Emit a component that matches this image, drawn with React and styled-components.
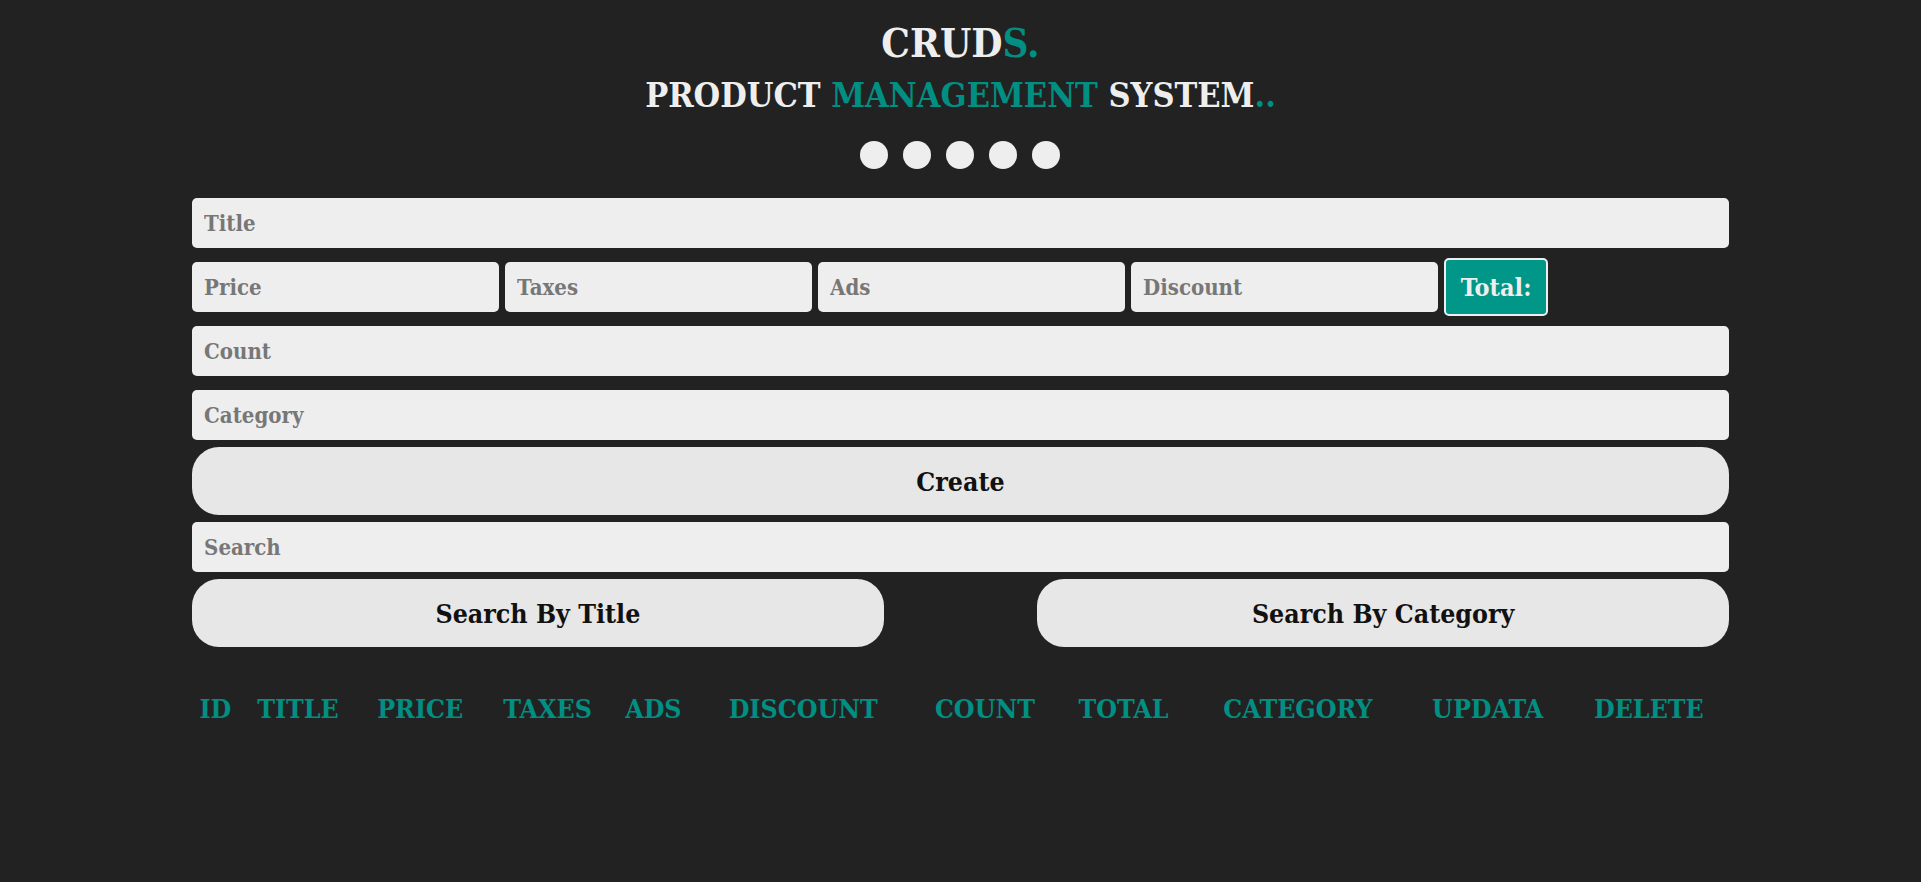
import React from "react";
import styled, { createGlobalStyle } from "styled-components";

const FONT = `"DejaVu Serif Condensed", "DejaVu Serif", "Liberation Serif", serif`;
const TEAL = "#008f82";

const Global = createGlobalStyle`
  html, body { margin: 0; padding: 0; background: #222; }
  body { font-family: ${FONT}; font-stretch: condensed; }
  * { box-sizing: border-box; }
  input::placeholder { color: #777; opacity: 1; }
`;

const Page = styled.div`
  min-height: 100vh;
  background: #222;
  color: #eee;
  padding-top: 20px;
`;

const Container = styled.div`
  width: 80%;
  margin: 0 auto;
`;

const Head = styled.header`
  text-align: center;
  display: flex;
  flex-direction: column;
  align-items: center;
`;

const Title = styled.h1`
  margin: 0;
  font-size: 40px;
  line-height: 46px;
  font-weight: 700;
  color: #eee;
`;

const SubTitle = styled.h2`
  margin: 8px 0 0;
  font-size: 34px;
  line-height: 42px;
  font-weight: 700;
  color: #eee;
`;

const Accent = styled.span`
  color: ${TEAL};
`;

const Dots = styled.div`
  display: flex;
  gap: 15px;
  margin-top: 25px;
`;

const Dot = styled.span`
  width: 28px;
  height: 28px;
  border-radius: 50%;
  background: #eee;
`;

const Form = styled.div`
  margin-top: 29px;
  display: flex;
  flex-direction: column;
  gap: 7px;
`;

const Fields = styled.div`
  display: flex;
  flex-direction: column;
  gap: 14px;
`;

const Field = styled.input`
  display: block;
  width: ${(p) => p.$w || "100%"};
  height: 50px;
  border: none;
  outline: none;
  border-radius: 5px;
  background: #eee;
  padding: 0 12px;
  font-family: ${FONT};
  font-stretch: condensed;
  font-weight: 700;
  font-size: 22px;
  color: #333;
`;

const PriceRow = styled.div`
  display: flex;
  align-items: center;
  gap: 6px;
  height: 50px;
`;

const TotalBox = styled.div`
  height: 58px;
  width: 104px;
  padding: 0 14px;
  display: flex;
  align-items: center;
  justify-content: center;
  background: #009688;
  border: 2px solid #eee;
  border-radius: 5px;
  color: #eee;
  font-size: 25px;
  font-weight: 700;
`;

const Button = styled.button`
  display: block;
  width: ${(p) => p.$w || "100%"};
  height: 68px;
  border: none;
  border-radius: 27px;
  background: #e7e7e7;
  color: #111;
  font-family: ${FONT};
  font-stretch: condensed;
  font-weight: 700;
  font-size: 26.5px;
  cursor: pointer;
`;

const ButtonRow = styled.div`
  display: flex;
  justify-content: space-between;
`;

const Table = styled.table`
  width: 100%;
  margin-top: 42px;
  border-collapse: collapse;
`;

const Th = styled.th`
  color: ${TEAL};
  font-size: 26.5px;
  font-weight: 700;
  text-transform: uppercase;
  text-align: center;
  padding: 4px 0;
`;

const headers = ["id", "title", "price", "taxes", "ads", "discount", "count", "total", "category", "updata", "delete"];

export default function App() {
  return (
    <Page>
      <Global />
      <Container>
        <Head>
          <Title>
            CRUD<Accent>S.</Accent>
          </Title>
          <SubTitle>
            PRODUCT <Accent>MANAGEMENT</Accent> SYSTEM<Accent>..</Accent>
          </SubTitle>
          <Dots>
            {[0, 1, 2, 3, 4].map((i) => (
              <Dot key={i} />
            ))}
          </Dots>
        </Head>
        <Form>
          <Fields>
            <Field placeholder="Title" />
            <PriceRow>
              <Field $w="307px" placeholder="Price" />
              <Field $w="307px" placeholder="Taxes" />
              <Field $w="307px" placeholder="Ads" />
              <Field $w="307px" placeholder="Discount" />
              <TotalBox>Total:</TotalBox>
            </PriceRow>
            <Field placeholder="Count" />
            <Field placeholder="Category" />
          </Fields>
          <Button>Create</Button>
          <Field placeholder="Search" />
          <ButtonRow>
            <Button $w="45%">Search By Title</Button>
            <Button $w="45%">Search By Category</Button>
          </ButtonRow>
        </Form>
        <Table>
          <thead>
            <tr>
              {headers.map((h) => (
                <Th key={h}>{h}</Th>
              ))}
            </tr>
          </thead>
        </Table>
      </Container>
    </Page>
  );
}
